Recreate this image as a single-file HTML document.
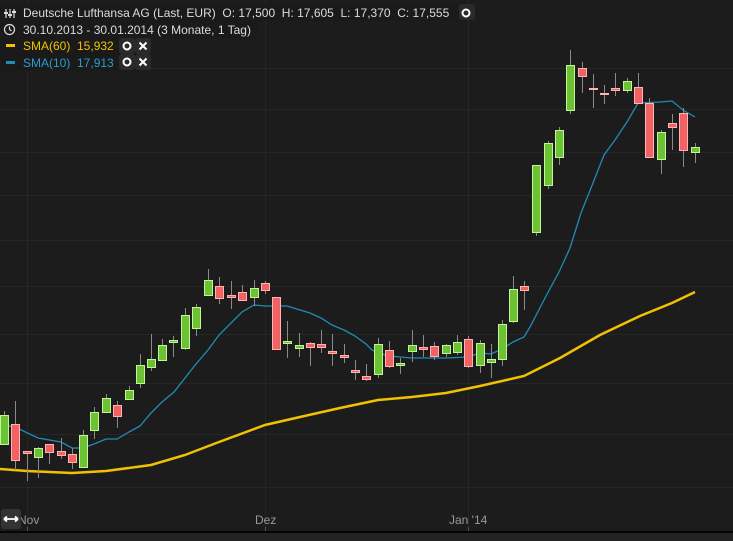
<!DOCTYPE html>
<html><head><meta charset="utf-8"><style>
html,body{margin:0;padding:0;background:#1c1c1c;width:733px;height:541px;overflow:hidden}
svg{display:block}
text{font-family:"Liberation Sans",sans-serif}
</style></head><body>
<svg width="733" height="541" viewBox="0 0 733 541" xmlns="http://www.w3.org/2000/svg">
<rect width="733" height="541" fill="#1c1c1c"/>
<g stroke="#262626" stroke-width="1">
<line x1="0" y1="68.5" x2="733" y2="68.5"/><line x1="0" y1="109.5" x2="733" y2="109.5"/>
<line x1="0" y1="152.5" x2="733" y2="152.5"/><line x1="0" y1="195.5" x2="733" y2="195.5"/>
<line x1="0" y1="240.5" x2="733" y2="240.5"/><line x1="0" y1="286.5" x2="733" y2="286.5"/>
<line x1="0" y1="334.5" x2="733" y2="334.5"/><line x1="0" y1="383.5" x2="733" y2="383.5"/>
<line x1="0" y1="434.5" x2="733" y2="434.5"/><line x1="0" y1="487.5" x2="733" y2="487.5"/>
<line x1="27.5" y1="0" x2="27.5" y2="531"/><line x1="265.5" y1="0" x2="265.5" y2="531"/><line x1="468.5" y1="0" x2="468.5" y2="531"/>
</g>
<polyline fill="none" stroke="#f2c200" stroke-width="2.5" points="0,469 27,471 72,473 106,471 151,465 185,455 219,442 265,425 300,417 340,408 378,400 412,397 446,393 480,386 524,376 560,358 600,335 640,316 672,303 695,292"/>
<polyline fill="none" stroke="#1f8cb4" stroke-width="1.3" points="0,428 4,425 15,427 38,438 61,442 72,448 83,448 94,444 106,439 117,439 129,432 140,426 151,413 162,402 174,392 185,378 196,364 208,350 219,335 231,323 242,312 254,305 265,306 287,306 310,313 321,318 332,325 344,330 355,336 366,344 372,350 378,353 389,356 400,357 412,358 446,358 468,357 480,353 491,354 502,349 513,342 524,337 530,327 545,298 559,272 570,248 581,213 593,183 604,155 615,140 627,122 638,103 660,102 672,101 683,110 695,117"/>
<g stroke="#8a8a8a" stroke-width="1">
<line x1="4.5" y1="411" x2="4.5" y2="444"/><line x1="15.5" y1="401" x2="15.5" y2="470"/><line x1="27.5" y1="451" x2="27.5" y2="481"/><line x1="38.5" y1="447" x2="38.5" y2="478"/><line x1="49.5" y1="445" x2="49.5" y2="464"/><line x1="61.5" y1="438" x2="61.5" y2="459"/><line x1="72.5" y1="448" x2="72.5" y2="469"/><line x1="83.5" y1="430" x2="83.5" y2="467"/><line x1="94.5" y1="407" x2="94.5" y2="439"/><line x1="106.5" y1="394" x2="106.5" y2="412"/><line x1="117.5" y1="401" x2="117.5" y2="428"/><line x1="129.5" y1="386" x2="129.5" y2="399"/><line x1="140.5" y1="354" x2="140.5" y2="388"/><line x1="151.5" y1="334" x2="151.5" y2="371"/><line x1="162.5" y1="339" x2="162.5" y2="360"/><line x1="173.5" y1="336" x2="173.5" y2="357"/><line x1="185.5" y1="308" x2="185.5" y2="350"/><line x1="196.5" y1="304" x2="196.5" y2="336"/><line x1="208.5" y1="269" x2="208.5" y2="295"/><line x1="219.5" y1="277" x2="219.5" y2="304"/><line x1="231.5" y1="281" x2="231.5" y2="309"/><line x1="242.5" y1="285" x2="242.5" y2="301"/><line x1="254.5" y1="280" x2="254.5" y2="306"/><line x1="265.5" y1="281" x2="265.5" y2="294"/><line x1="276.5" y1="297" x2="276.5" y2="349"/><line x1="287.5" y1="321" x2="287.5" y2="358"/><line x1="299.5" y1="333" x2="299.5" y2="357"/><line x1="310.5" y1="342" x2="310.5" y2="366"/><line x1="321.5" y1="330" x2="321.5" y2="353"/><line x1="332.5" y1="334" x2="332.5" y2="366"/><line x1="344.5" y1="344" x2="344.5" y2="363"/><line x1="355.5" y1="360" x2="355.5" y2="380"/><line x1="366.5" y1="364" x2="366.5" y2="381"/><line x1="378.5" y1="338" x2="378.5" y2="378"/><line x1="389.5" y1="341" x2="389.5" y2="368"/><line x1="400.5" y1="358" x2="400.5" y2="374"/><line x1="412.5" y1="330" x2="412.5" y2="362"/><line x1="423.5" y1="335" x2="423.5" y2="357"/><line x1="434.5" y1="342" x2="434.5" y2="360"/><line x1="446.5" y1="344" x2="446.5" y2="357"/><line x1="457.5" y1="335" x2="457.5" y2="355"/><line x1="468.5" y1="336" x2="468.5" y2="368"/><line x1="480.5" y1="340" x2="480.5" y2="373"/><line x1="491.5" y1="344" x2="491.5" y2="378"/><line x1="502.5" y1="320" x2="502.5" y2="366"/><line x1="513.5" y1="276" x2="513.5" y2="323"/><line x1="524.5" y1="281" x2="524.5" y2="310"/><line x1="536.5" y1="165" x2="536.5" y2="236"/><line x1="548.5" y1="141" x2="548.5" y2="189"/><line x1="559.5" y1="127" x2="559.5" y2="165"/><line x1="570.5" y1="50" x2="570.5" y2="114"/><line x1="582.5" y1="62" x2="582.5" y2="93"/><line x1="593.5" y1="74" x2="593.5" y2="108"/><line x1="604.5" y1="85" x2="604.5" y2="104"/><line x1="615.5" y1="73" x2="615.5" y2="96"/><line x1="627.5" y1="78" x2="627.5" y2="93"/><line x1="638.5" y1="73" x2="638.5" y2="103"/><line x1="649.5" y1="98" x2="649.5" y2="158"/><line x1="661.5" y1="130" x2="661.5" y2="174"/><line x1="672.5" y1="114" x2="672.5" y2="150"/><line x1="683.5" y1="108" x2="683.5" y2="167"/><line x1="695.5" y1="143" x2="695.5" y2="163"/>
</g>
<g fill="#6cc232" stroke="#c2f59a" stroke-width="1">
<rect x="0.5" y="415.5" width="8" height="29"/><rect x="34.5" y="448.5" width="8" height="9"/><rect x="79.5" y="435.5" width="8" height="32"/><rect x="90.5" y="412.5" width="8" height="18"/><rect x="102.5" y="398.5" width="8" height="14"/><rect x="125.5" y="390.5" width="8" height="9"/><rect x="136.5" y="365.5" width="8" height="18"/><rect x="147.5" y="359.5" width="8" height="8"/><rect x="158.5" y="345.5" width="8" height="15"/><rect x="169.5" y="340.5" width="8" height="2"/><rect x="181.5" y="315.5" width="8" height="33"/><rect x="192.5" y="307.5" width="8" height="21"/><rect x="204.5" y="280.5" width="8" height="15"/><rect x="250.5" y="288.5" width="8" height="9"/><rect x="283.5" y="341.5" width="8" height="2"/><rect x="295.5" y="345.5" width="8" height="3"/><rect x="374.5" y="344.5" width="8" height="30"/><rect x="396.5" y="363.5" width="8" height="2"/><rect x="408.5" y="345.5" width="8" height="6"/><rect x="442.5" y="345.5" width="8" height="8"/><rect x="453.5" y="342.5" width="8" height="10"/><rect x="476.5" y="343.5" width="8" height="22"/><rect x="487.5" y="359.5" width="8" height="3"/><rect x="498.5" y="324.5" width="8" height="35"/><rect x="509.5" y="289.5" width="8" height="32"/><rect x="532.5" y="165.5" width="8" height="67"/><rect x="544.5" y="143.5" width="8" height="42"/><rect x="555.5" y="130.5" width="8" height="27"/><rect x="566.5" y="65.5" width="8" height="45"/><rect x="623.5" y="81.5" width="8" height="9"/><rect x="657.5" y="132.5" width="8" height="27"/><rect x="691.5" y="147.5" width="8" height="5"/>
</g>
<g fill="#f26262" stroke="#ffb4b4" stroke-width="1">
<rect x="11.5" y="424.5" width="8" height="36"/><rect x="23.5" y="451.5" width="8" height="2"/><rect x="45.5" y="444.5" width="8" height="8"/><rect x="57.5" y="451.5" width="8" height="4"/><rect x="68.5" y="454.5" width="8" height="8"/><rect x="113.5" y="405.5" width="8" height="11"/><rect x="215.5" y="286.5" width="8" height="12"/><rect x="227.5" y="295.5" width="8" height="2"/><rect x="238.5" y="292.5" width="8" height="8"/><rect x="261.5" y="283.5" width="8" height="7"/><rect x="272.5" y="297.5" width="8" height="52"/><rect x="306.5" y="343.5" width="8" height="4"/><rect x="317.5" y="344.5" width="8" height="3"/><rect x="328.5" y="351.5" width="8" height="2"/><rect x="340.5" y="355.5" width="8" height="2"/><rect x="351.5" y="370.5" width="8" height="2"/><rect x="362.5" y="376.5" width="8" height="3"/><rect x="385.5" y="350.5" width="8" height="16"/><rect x="419.5" y="347.5" width="8" height="2"/><rect x="430.5" y="346.5" width="8" height="10"/><rect x="464.5" y="339.5" width="8" height="27"/><rect x="520.5" y="286.5" width="8" height="4"/><rect x="578.5" y="68.5" width="8" height="8"/><rect x="589.5" y="88.5" width="8" height="1"/><rect x="600.5" y="93.5" width="8" height="1"/><rect x="611.5" y="88.5" width="8" height="2"/><rect x="634.5" y="87.5" width="8" height="16"/><rect x="645.5" y="103.5" width="8" height="54"/><rect x="668.5" y="123.5" width="8" height="4"/><rect x="679.5" y="113.5" width="8" height="37"/>
</g>
<!-- header -->
<rect x="0" y="3" width="465" height="18" fill="#1a1a1a"/>
<rect x="0" y="20" width="258" height="18" fill="#1a1a1a"/>
<rect x="0" y="37" width="150" height="34" fill="#1a1a1a"/>
<g stroke="#ddd" stroke-width="1.2" fill="none">
<line x1="6" y1="9" x2="6" y2="18"/><line x1="10" y1="9" x2="10" y2="18"/><line x1="14" y1="9" x2="14" y2="18"/>
<circle cx="9.5" cy="29.5" r="5"/><polyline points="9.5,26.5 9.5,29.5 11.5,31"/>
</g>
<g fill="#ddd"><rect x="4" y="12" width="4" height="2"/><rect x="8" y="14" width="4" height="2"/><rect x="12" y="11" width="4" height="2"/></g>
<text x="23" y="17" font-size="12" fill="#dcdcdc">Deutsche Lufthansa AG (Last, EUR)&#160; O: 17,500&#160; H: 17,605&#160; L: 17,370&#160; C: 17,555</text>
<text x="23" y="34" font-size="12" fill="#dcdcdc">30.10.2013 - 30.01.2014 (3 Monate, 1 Tag)</text>
<rect x="6" y="44" width="9" height="3" fill="#f2c200"/>
<text x="23" y="50" font-size="12" fill="#f2c200">SMA(60)&#160; 15,932</text>
<rect x="6" y="61" width="9" height="3" fill="#1f8cb4"/>
<text x="23" y="67" font-size="12" fill="#2a9ccc">SMA(10)&#160; 17,913</text>
<g>
<rect x="459" y="4" width="16" height="16" rx="3" fill="#2a2a2a"/><circle cx="466" cy="13" r="3.5" fill="none" stroke="#fff" stroke-width="2"/>
<rect x="119" y="38" width="16" height="16" rx="3" fill="#2a2a2a"/><circle cx="127" cy="46" r="3.5" fill="none" stroke="#fff" stroke-width="2"/>
<rect x="135" y="38" width="16" height="16" rx="3" fill="#2a2a2a"/><path d="M139.5 42.5l7 7M146.5 42.5l-7 7" stroke="#fff" stroke-width="2"/>
<rect x="119" y="54" width="16" height="16" rx="3" fill="#2a2a2a"/><circle cx="127" cy="62" r="3.5" fill="none" stroke="#fff" stroke-width="2"/>
<rect x="135" y="54" width="16" height="16" rx="3" fill="#2a2a2a"/><path d="M139.5 58.5l7 7M146.5 58.5l-7 7" stroke="#fff" stroke-width="2"/>
</g>
<!-- axis -->
<line x1="27.5" y1="527" x2="27.5" y2="531" stroke="#555"/><line x1="265.5" y1="527" x2="265.5" y2="531" stroke="#555"/><line x1="468.5" y1="527" x2="468.5" y2="531" stroke="#555"/>
<text x="18" y="524" font-size="12" fill="#9a9a9a">Nov</text>
<text x="255" y="524" font-size="12" fill="#9a9a9a">Dez</text>
<text x="449" y="524" font-size="12" fill="#9a9a9a">Jan '14</text>
<rect x="1" y="509" width="20" height="20" rx="3" fill="#333"/>
<path d="M4 519h14M4 519l3-2.5M4 519l3 2.5M18 519l-3-2.5M18 519l-3 2.5" stroke="#fff" stroke-width="1.8" fill="none"/>
<rect x="0" y="531" width="733" height="2" fill="#050505"/>
<rect x="0" y="533" width="733" height="8" fill="#232323"/>
</svg>
</body></html>
